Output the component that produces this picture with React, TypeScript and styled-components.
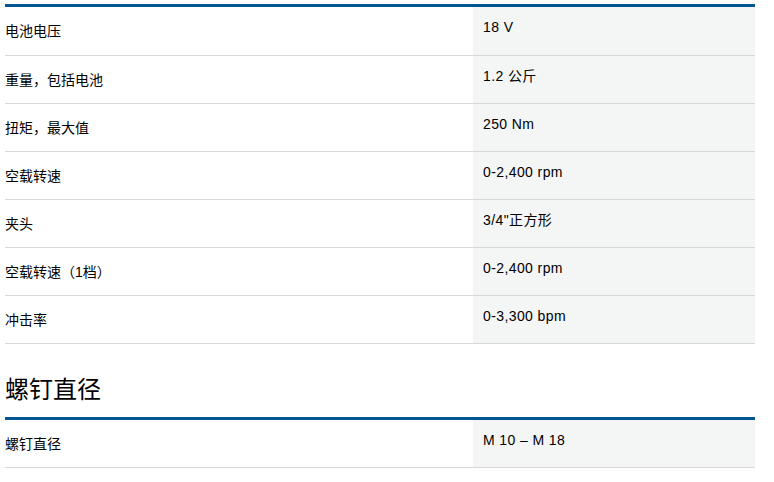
import React from "react";
import styled, { createGlobalStyle } from "styled-components";

const Global = createGlobalStyle`
  html, body { margin: 0; padding: 0; background: #fff; }
  body { font-family: "Liberation Sans", "Noto Sans CJK SC", sans-serif; color: #000; }
`;

const Page = styled.div`
  width: 750px;
  padding: 4px 19px 0 5px;
`;

const Section = styled.section`
  display: flex;
  flex-direction: column;
`;

const Heading = styled.h2`
  margin: 31px 0 13px;
  font-size: 24px;
  font-weight: 400;
  line-height: 29px;
`;

const Table = styled.div`
  border-top: 3px solid #005691;
  display: flex;
  flex-direction: column;
`;

const Row = styled.div<{ $first?: boolean }>`
  display: grid;
  grid-template-columns: 468px 1fr;
  min-height: ${(p) => (p.$first ? "48px" : "47px")};
  border-bottom: 1px solid #d7d8d9;
`;

const Label = styled.div`
  align-self: center;
  font-size: 14px;
  line-height: 20px;
`;

const Value = styled.div`
  background: #f4f5f5;
  padding: 10px 10px;
  font-size: 14px;
  line-height: 20px;
  letter-spacing: 0.4px;
`;

const specs: [string, string][] = [
  ["电池电压", "18 V"],
  ["重量，包括电池", "1.2 公斤"],
  ["扭矩，最大值", "250 Nm"],
  ["空载转速", "0-2,400 rpm"],
  ["夹头", "3/4\"正方形"],
  ["空载转速（1档）", "0-2,400 rpm"],
  ["冲击率", "0-3,300 bpm"],
];

const screw: [string, string][] = [["螺钉直径", "M 10 – M 18"]];

export default function App() {
  return (
    <Page>
      <Global />
      <Section>
        <Table>
          {specs.map(([l, v], i) => (
            <Row key={l} $first={i === 0}>
              <Label>{l}</Label>
              <Value>{v}</Value>
            </Row>
          ))}
        </Table>
      </Section>
      <Section>
        <Heading>螺钉直径</Heading>
        <Table>
          {screw.map(([l, v]) => (
            <Row key={l}>
              <Label>{l}</Label>
              <Value>{v}</Value>
            </Row>
          ))}
        </Table>
      </Section>
    </Page>
  );
}
